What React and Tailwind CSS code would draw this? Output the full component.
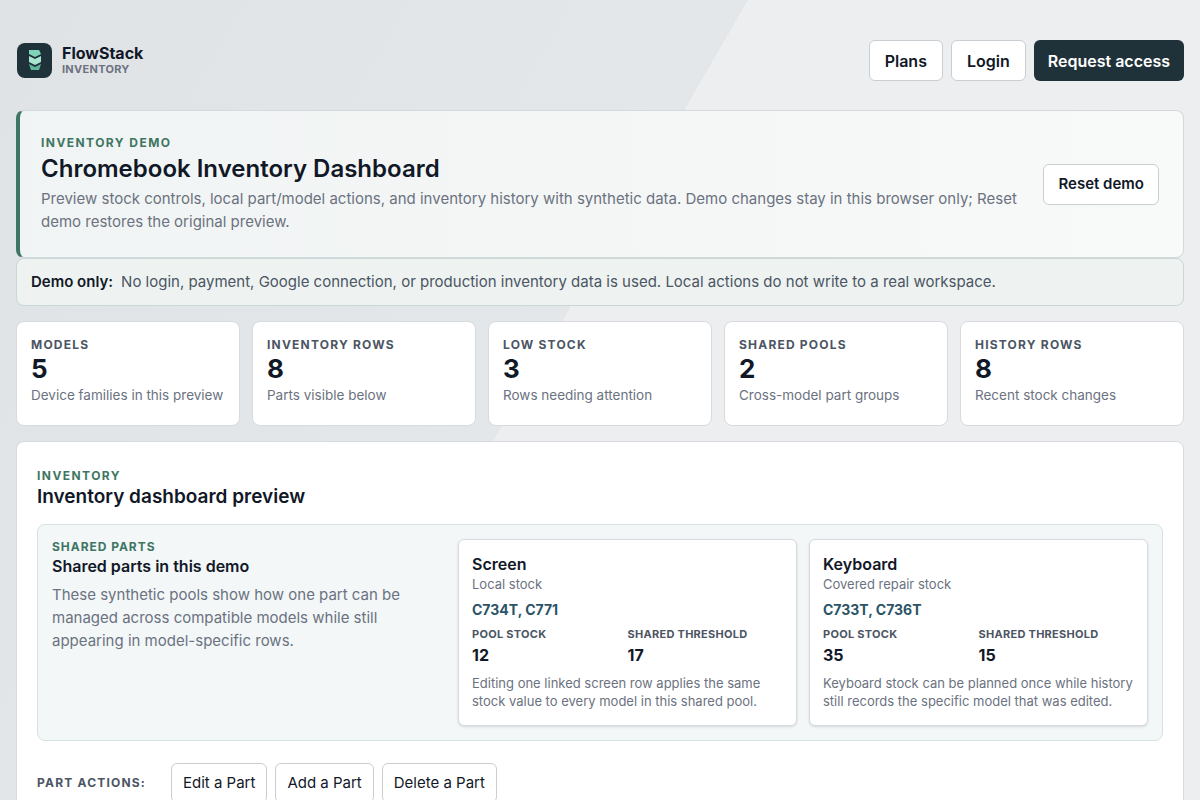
export default function App() {
  const stats = [
    ["MODELS", "5", "Device families in this preview"],
    ["INVENTORY ROWS", "8", "Parts visible below"],
    ["LOW STOCK", "3", "Rows needing attention"],
    ["SHARED POOLS", "2", "Cross-model part groups"],
    ["HISTORY ROWS", "8", "Recent stock changes"],
  ];
  const pools = [
    ["Screen", "Local stock", "C734T, C771", "12", "17", "Editing one linked screen row applies the same stock value to every model in this shared pool."],
    ["Keyboard", "Covered repair stock", "C733T, C736T", "35", "15", "Keyboard stock can be planned once while history still records the specific model that was edited."],
  ];
  return (
    <div className="relative w-[1200px] h-[800px] overflow-hidden bg-[#e6e9eb] text-[#111827]" style={{ fontFamily: "Inter, 'Noto Sans', sans-serif" }}>
      <div className="absolute inset-0 bg-[linear-gradient(120deg,#dfe3e6_0%,#e4e7ea_45%,#eceef0_45%,#eceef0_100%)]" />
      <div className="relative px-4 pt-[39px]">
        <div className="flex items-center justify-between">
          <div className="flex items-center gap-2.5 pl-[1px]">
            <div className="w-[35px] h-[35px] rounded-lg bg-[#1f3239] flex items-center justify-center">
              <svg width="20" height="24" viewBox="0 0 20 24">
                <path d="M4 2 L14 2 L16 6 L10 9 L4 6 Z" fill="#7fd3b8" />
                <path d="M4 8 L10 11 L16 8 L16 14 L10 17 L4 14 Z" fill="#a8e6cf" />
                <path d="M4 16 L10 19 L16 16 L14 22 L6 22 Z" fill="#5fb89c" />
              </svg>
            </div>
            <div className="leading-tight">
              <div className="text-[16px] font-bold">FlowStack</div>
              <div className="text-[11px] font-bold text-[#6b7280] tracking-wide">INVENTORY</div>
            </div>
          </div>
          <div className="flex gap-2 mt-[1px]">
            <button className="h-[41px] px-[15px] rounded-md border border-[#c9ced3] bg-white text-[16px] font-semibold">Plans</button>
            <button className="h-[41px] px-[15px] rounded-md border border-[#c9ced3] bg-white text-[16px] font-semibold">Login</button>
            <button className="h-[41px] px-[14px] rounded-md bg-[#1f3239] text-white text-[16px] font-semibold">Request access</button>
          </div>
        </div>

        <div className="mt-[29px] rounded-lg border border-[#d3d9dc] border-l-4 border-l-[#3e7663] bg-[linear-gradient(90deg,#f1f4f4,#f8f9f9)] pl-[21px] pr-6 pt-[24px] pb-[24px] flex items-center justify-between">
          <div>
            <div className="text-[12px] leading-[16px] font-bold tracking-[0.12em] text-[#3e7663]">INVENTORY DEMO</div>
            <div className="text-[24px] leading-[30px] font-semibold mt-[3px]">Chromebook Inventory Dashboard</div>
            <div className="text-[15px] text-[#6b7280] leading-[23px] mt-[3px] w-[1000px]">Preview stock controls, local part/model actions, and inventory history with synthetic data. Demo changes stay in this browser only; Reset demo restores the original preview.</div>
          </div>
          <button className="shrink-0 h-[41px] px-[14px] rounded-md border border-[#c9ced3] bg-white text-[15px] font-semibold -ml-[12px]">Reset demo</button>
        </div>

        <div className="mt-0 h-[48px] rounded-lg border border-[#c9d8d3] bg-[#eef3f1] px-[14px] flex items-center text-[15px] text-[#4b5563]">
          <span className="font-semibold text-[#111827] mr-2">Demo only:</span> No login, payment, Google connection, or production inventory data is used. Local actions do not write to a real workspace.
        </div>

        <div className="mt-[15px] grid grid-cols-5 gap-3">
          {stats.map(([l, n, d]) => (
            <div key={l} className="h-[105px] rounded-lg border border-[#d7dbdf] bg-white px-[14px] pt-[15px]">
              <div className="text-[12px] leading-[16px] font-bold tracking-[0.1em] text-[#4b5563]">{l}</div>
              <div className="text-[26px] font-bold leading-[32px]">{n}</div>
              <div className="text-[13.5px] leading-[20px] text-[#6b7280] whitespace-nowrap">{d}</div>
            </div>
          ))}
        </div>

        <div className="mt-[15px] rounded-lg border border-[#d7dbdf] bg-white px-5 pt-[26px] h-[400px]">
          <div className="text-[12px] leading-[16px] font-bold tracking-[0.12em] text-[#3e7663]">INVENTORY</div>
          <div className="text-[19px] leading-[26px] font-semibold">Inventory dashboard preview</div>
          <div className="mt-[14px] rounded-lg border border-[#d6e2e0] bg-[#f3f7f8] p-[14px] flex gap-3 h-[217px]">
            <div className="w-[394px] pr-4">
              <div className="text-[12px] leading-[16px] font-bold tracking-[0.08em] text-[#3e7663]">SHARED PARTS</div>
              <div className="text-[16px] leading-[22px] font-semibold">Shared parts in this demo</div>
              <div className="text-[15px] leading-[23px] text-[#6b7280] mt-[6px]">These synthetic pools show how one part can be managed across compatible models while still appearing in model-specific rows.</div>
            </div>
            {pools.map(([t, s, m, a, b, d]) => (
              <div key={t} className="flex-1 rounded-md border border-[#d7dbdf] bg-white px-[13px] pt-[13px] shadow-sm">
                <div className="text-[16px] font-semibold leading-[22px]">{t}</div>
                <div className="text-[13px] leading-[18px] text-[#6b7280]">{s}</div>
                <div className="text-[14px] leading-[20px] font-bold text-[#2b5466] mt-[7px]">{m}</div>
                <div className="grid grid-cols-2 mt-[6px]">
                  <div>
                    <div className="text-[11px] leading-[16px] font-bold tracking-wide text-[#4b5563]">POOL STOCK</div>
                    <div className="text-[16px] leading-[22px] font-bold mt-[2px]">{a}</div>
                  </div>
                  <div>
                    <div className="text-[11px] leading-[16px] font-bold tracking-wide text-[#4b5563]">SHARED THRESHOLD</div>
                    <div className="text-[16px] leading-[22px] font-bold mt-[2px]">{b}</div>
                  </div>
                </div>
                <div className="text-[13px] leading-[18px] text-[#6b7280] mt-[8px]">{d}</div>
              </div>
            ))}
          </div>
          <div className="mt-[22px] flex items-center gap-2">
            <div className="text-[12px] font-bold tracking-[0.1em] text-[#4b5563] w-[126px]">PART ACTIONS:</div>
            {["Edit a Part", "Add a Part", "Delete a Part"].map(x => (
              <button key={x} className="h-[40px] px-[11px] rounded-md border border-[#c9ced3] bg-white text-[15px]">{x}</button>
            ))}
          </div>
        </div>
      </div>
    </div>
  );
}
